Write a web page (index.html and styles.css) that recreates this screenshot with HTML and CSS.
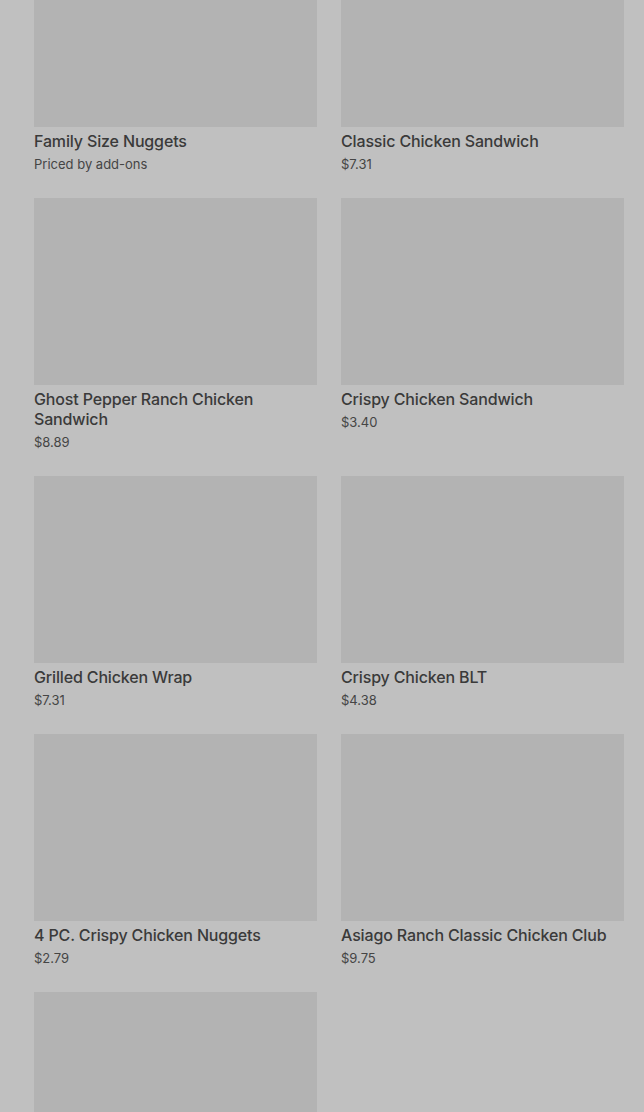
FILE: index.html
```html
<!DOCTYPE html>
<html lang="en">
<head>
<meta charset="utf-8">
<title>Menu</title>
<link rel="stylesheet" href="styles.css">
</head>
<body>
<main class="menu">
  <div class="grid">
    <div class="item"><div class="thumb"></div><div class="name">Family Size Nuggets</div><div class="price">Priced by add-ons</div></div>
    <div class="item"><div class="thumb"></div><div class="name">Classic Chicken Sandwich</div><div class="price">$7.31</div></div>
    <div class="item"><div class="thumb"></div><div class="name">Ghost Pepper Ranch Chicken Sandwich</div><div class="price">$8.89</div></div>
    <div class="item"><div class="thumb"></div><div class="name">Crispy Chicken Sandwich</div><div class="price">$3.40</div></div>
    <div class="item"><div class="thumb"></div><div class="name">Grilled Chicken Wrap</div><div class="price">$7.31</div></div>
    <div class="item"><div class="thumb"></div><div class="name">Crispy Chicken BLT</div><div class="price">$4.38</div></div>
    <div class="item"><div class="thumb"></div><div class="name">4 PC. Crispy Chicken Nuggets</div><div class="price">$2.79</div></div>
    <div class="item"><div class="thumb"></div><div class="name">Asiago Ranch Classic Chicken Club</div><div class="price">$9.75</div></div>
    <div class="item"><div class="thumb"></div></div>
  </div>
</main>
</body>
</html>
```
FILE: styles.css
```css
html, body {
  margin: 0;
  padding: 0;
  background: #c0c0c0;
  height: 100%;
  overflow: hidden;
}
body {
  font-family: Inter, "Liberation Sans", sans-serif;
  color: #3b3b3b;
}
.menu {
  padding: 0 20px 0 34px;
  margin-top: -60px;
}
.grid {
  display: grid;
  grid-template-columns: 283px 283px;
  column-gap: 24px;
  row-gap: 26px;
  align-items: start;
}
.thumb {
  height: 187px;
  background: #b3b3b3;
}
.name {
  margin-top: 4px;
  font-size: 16px;
  line-height: 20px;
  font-weight: 500;
  letter-spacing: -0.15px;
  color: #3a3a3a;
}
.price {
  margin-top: 5px;
  font-size: 13px;
  line-height: 16px;
  color: #454545;
}
```
